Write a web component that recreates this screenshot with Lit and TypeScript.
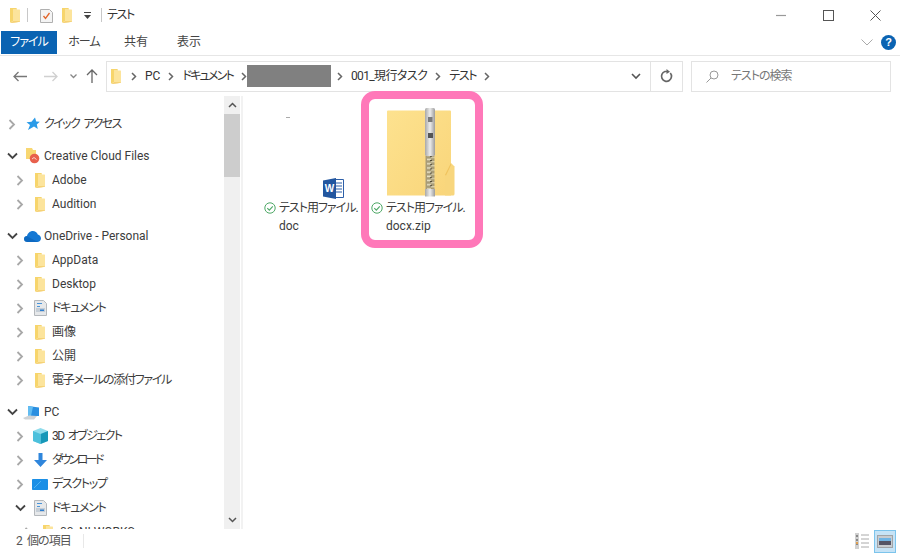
import { LitElement, html, css, svg } from "lit";
import { customElement } from "lit/decorators.js";

const folderSide = (w = 10, h = 15) => html`<svg width=${w} height=${h} viewBox="0 0 10 15">
  <path d="M3 1.500h6.500a.5.5 0 0 1 .5.500v11.500H3z" fill="#fce49c"/>
  <path d="M0 0h6.500l.5 1.500H3v11.800L0 14.500z" fill="#f7d56c"/>
  <path d="M3 13.300h7v.4l-4 .8-6 .5z" fill="#f3c85a"/>
</svg>`;

const chevR = () => html`<svg width="8" height="11" viewBox="0 0 8 11"><path d="M1.500 1l4.500 4.500L1.500 10" fill="none" stroke="#a8a8a8" stroke-width="1.800"/></svg>`;
const chevD = () => html`<svg width="11" height="8" viewBox="0 0 11 8"><path d="M1 1.500l4.500 4.500L10 1.500" fill="none" stroke="#444" stroke-width="1.800"/></svg>`;
const crumb = () => html`<svg class="crumb" width="6" height="9" viewBox="0 0 6 9"><path d="M1 1l3.500 3.500L1 8" fill="none" stroke="#666" stroke-width="1.500"/></svg>`;

const star = html`<svg width="16" height="14" viewBox="-2 0 16 14"><path d="M9 .5l1.200 4 3.600.3-3 2.600 1 4.600L8 9.600 2 13l2-5L.5 5.200l5-.4z" fill="#2a9be8"/></svg>`;
const ccFolder = html`<svg width="18" height="16" viewBox="-3 0 18 16"><path d="M0 0h6l1 2h3v9H0z" fill="#f8d772"/><circle cx="8.500" cy="10.500" r="4.800" fill="#e8604c"/><path d="M6 11l2-1.500 2.500 2" fill="none" stroke="#fbd0c8" stroke-width="1"/></svg>`;
const cloud = html`<svg width="17" height="11" viewBox="0 0 17 11"><path d="M3.500 11C1.500 11 0 9.700 0 8s1.300-3 3-3c.6-2.800 3-5 5.800-5 2.300 0 4.200 1.300 5 3.500 1.500.2 3.200 1.900 3.200 3.700 0 2.200-1.700 3.800-3.700 3.800z" fill="#1478d4"/><path d="M3 11C1.500 11 0 9.700 0 8c0-1.500 1-2.500 2.500-2.900L8 8l6 3z" fill="#0a5cb0" opacity=".55"/></svg>`;
const docIcon = html`<svg width="13" height="16" viewBox="0 0 13 16"><path d="M.5.500h9l3 3v12H.5z" fill="#e6e8ea" stroke="#b4b8bc"/><path d="M3 3h5v1H3zM3 6h3v1H3z" fill="#4a94d8"/><path d="M2 8h9v4H2z" fill="#c4cdd6"/><path d="M6 9.500h4v1.500H6z" fill="#2f7fd0"/></svg>`;
const pc = html`<svg width="20" height="15" viewBox="0 0 20 15"><path d="M6 1l11 1.500V11H6z" fill="#2a8fe0"/><path d="M6 1l5 .7-2 9.300H6z" fill="#63bdf2"/><path d="M1 13l6-2.500 8 .5-3 3.500H3z" fill="#cfd3d6"/></svg>`;
const cube = html`<svg width="15" height="16" viewBox="0 0 15 16"><path d="M7.500 0L15 3v10l-7.500 3L0 13V3z" fill="#8fdcec"/><path d="M7.500 6L15 3v10l-7.500 3z" fill="#1797b8"/><path d="M0 3l7.500 3v10L0 13z" fill="#4cc0dc"/></svg>`;
const dl = html`<svg width="13" height="14" viewBox="0 0 13 14"><path d="M4.500 0h4v7H13l-6.500 7L0 7h4.500z" fill="#2f86dc"/></svg>`;
const desk = html`<svg width="16" height="11" viewBox="0 0 16 11"><rect width="16" height="11" rx=".8" fill="#1b8fe6"/><path d="M2 9L9 2" stroke="#4fb2f2" stroke-width="1"/></svg>`;

type Row = { t: string; l: 0 | 1 | 2; c: "r" | "d"; i: unknown; k?: string };
const S1: Row[] = [{ t: "クイック アクセス", l: 0, c: "r", i: star, k: "ks" }];
const S2: Row[] = [
  { t: "Creative Cloud Files", l: 0, c: "d", i: ccFolder },
  { t: "Adobe", l: 1, c: "r", i: folderSide() },
  { t: "Audition", l: 1, c: "r", i: folderSide() },
];
const S3: Row[] = [
  { t: "OneDrive - Personal", l: 0, c: "d", i: cloud },
  { t: "AppData", l: 1, c: "r", i: folderSide() },
  { t: "Desktop", l: 1, c: "r", i: folderSide() },
  { t: "ドキュメント", l: 1, c: "r", i: docIcon, k: "k" },
  { t: "画像", l: 1, c: "r", i: folderSide() },
  { t: "公開", l: 1, c: "r", i: folderSide() },
  { t: "電子メールの添付ファイル", l: 1, c: "r", i: folderSide(), k: "k" },
];
const S4: Row[] = [
  { t: "PC", l: 0, c: "d", i: pc },
  { t: "3D オブジェクト", l: 1, c: "r", i: cube, k: "ks" },
  { t: "ダウンロード", l: 1, c: "r", i: dl, k: "kk" },
  { t: "デスクトップ", l: 1, c: "r", i: desk, k: "k" },
  { t: "ドキュメント", l: 1, c: "d", i: docIcon, k: "k" },
  { t: "00_NI WORKS", l: 2, c: "r", i: folderSide() },
];

const check = html`<svg class="check" width="12" height="12" viewBox="0 0 12 12"><circle cx="6" cy="6" r="5.200" fill="none" stroke="#4ea866" stroke-width="1"/><path d="M3.300 6.100l2 2 3.500-3.800" fill="none" stroke="#4ea866" stroke-width="1.100"/></svg>`;

const zipFolder = html`<svg width="70" height="89" viewBox="0 0 70 89">
  <defs>
    <linearGradient id="fg" x1="0" y1="0" x2="1" y2="1"><stop offset="0" stop-color="#fde28f"/><stop offset="1" stop-color="#f9d57a"/></linearGradient>
    <linearGradient id="zg" x1="0" y1="0" x2="1" y2="0"><stop offset="0" stop-color="#a8a8a8"/><stop offset=".5" stop-color="#ececec"/><stop offset="1" stop-color="#9c9c9c"/></linearGradient>
    <pattern id="teeth" width="10" height="4.200" patternUnits="userSpaceOnUse"><rect width="10" height="4.200" fill="#a89c78"/><rect x="1" y=".4" width="4" height="1.500" fill="#e8e2c8"/><rect x="5" y="2.500" width="4" height="1.300" fill="#d8d0b0"/><rect x="4" y="1.600" width="2" height="1" fill="#4e4838"/></pattern>
  </defs>
  <path d="M1 3.500a1 1 0 0 1 1-1h62a1 1 0 0 1 1 1V87.500H1z" fill="url(#fg)"/>
  <path d="M59 87.500V67l6-12 3.500 3.500V86a1.500 1.500 0 0 1-1.500 1.500z" fill="#f8d67d"/>
  <path d="M59 67l6-12v2l-5 10.500z" fill="#f0c25c"/>
  <rect x="39" y="0" width="10" height="48" rx="1.500" fill="url(#zg)"/>
  <rect x="39" y="81" width="10" height="7.500" fill="url(#zg)"/>
  <rect x="39.500" y="48" width="9" height="33" fill="url(#teeth)"/>
  <rect x="42" y="9" width="4.500" height="5" fill="#7a7a7a"/>
  <rect x="42" y="25" width="5" height="5" fill="#555"/>
</svg>`;

const wordIcon = html`<svg width="21" height="21" viewBox="0 0 21 21">
  <path d="M8 1.500h12.500v18H8z" fill="#fff" stroke="#2d5fa8"/>
  <path d="M13 5h6M13 8h6M13 11h6M13 14h6" stroke="#2d5fa8" stroke-width="1.200"/>
  <path d="M0 2.500L13 0v21L0 18.500z" fill="#22569f"/>
  ${svg`<text x="6.500" y="14" text-anchor="middle" font-family="Liberation Sans" font-weight="700" font-size="10" fill="#fff">W</text>`}
</svg>`;

@customElement("app-root")
export class AppRoot extends LitElement {
  static styles = css`
    :host { display: flex; flex-direction: column; width: 900px; height: 553px; overflow: hidden; background: #fff; color: #333;
      font-family: Roboto, "Noto Sans CJK JP", "Liberation Sans", sans-serif; font-size: 12px; line-height: 18px; font-feature-settings: "palt"; }
    svg { display: block; flex: none; }
    .k { letter-spacing: -1.3px; }
    .kd { letter-spacing: -1.8px; }
    .ks { letter-spacing: -1.6px; word-spacing: 3px; }
    .kk { letter-spacing: -2.6px; }
    .k1 { letter-spacing: -1px; }
    .k2 { letter-spacing: -0.6px; }
    .kst { letter-spacing: -0.9px; word-spacing: 3px; }
    .title { height: 30px; display: flex; align-items: center; flex: none; padding: 0 0 0 10px; }
    .title .sep { width: 1px; height: 14px; background: #c8c8c8; }
    .title .name { margin-left: 5px; }
    .title .sep.a { margin: 0 12px 0 7px; }
    .title .sep.b { margin-left: 10px; }
    .title .s9 { width: 9px; }
    .title .s12 { width: 12px; }
    .win { margin-left: auto; display: flex; align-items: center; gap: 36px; padding-right: 19px; }
    .tabs { height: 24px; display: flex; align-items: center; flex: none; padding-left: 1px; border-bottom: 1px solid #e6e6e6; padding-bottom: 1px; }
    .tab { width: 50px; text-align: center; color: #444; }
    .tab.file { width: 56px; height: 23px; line-height: 23px; background: #0a63b2; color: #fff; }
    .tab.home { width: 54px; }
    .tab.view { margin-left: 3px; }
    .tabs .right { margin-left: auto; display: flex; align-items: center; gap: 8px; padding-right: 4px; }
    .help { width: 15px; height: 15px; border-radius: 50%; background: #0a63b2; color: #fff; font: 700 11px/15px "Liberation Sans", sans-serif; text-align: center; }
    .nav { height: 40px; flex: none; display: flex; align-items: center; padding-left: 13px; }
    .navbtns { display: flex; align-items: center; width: 93px; gap: 0; }
    .navbtns .s17 { width: 17px; }
    .navbtns .s12 { width: 12px; }
    .navbtns .s9 { width: 9px; }
    .addr { width: 577px; height: 31px; box-sizing: border-box; border: 1px solid #e3e3e3; display: flex; align-items: center; padding-left: 4px; }
    .addr .crumb { margin: 0 8px; }
    .addr .s1 { width: 2px; }
    .addr .redact { width: 84px; height: 22px; background: #808080; margin-right: -2px; margin-left: -8px; }
    .addr .tail { margin-left: auto; display: flex; align-items: center; height: 100%; }
    .addr .tail .dd { margin-right: 9px; }
    .addr .tail .ref { width: 31px; height: 100%; border-left: 1px solid #e3e3e3; display: flex; align-items: center; justify-content: center; }
    .search { width: 200px; height: 31px; box-sizing: border-box; border: 1px solid #e3e3e3; margin-left: 8px; display: flex; align-items: center; padding-left: 14px; gap: 12px; color: #777; }
    .body { flex: 1; min-height: 0; display: flex; }
    .side { width: 224px; flex: none; overflow: hidden; padding-top: 16px; box-sizing: border-box; }
    .sec { margin-bottom: 8px; }
    .row { height: 24px; display: flex; align-items: center; white-space: nowrap; color: #3c3c3c; }
    .cv { width: 16px; display: flex; justify-content: center; flex: none; }
    .ic { width: 24px; flex: none; display: flex; justify-content: center; }
    .l0 { padding-left: 4px; }
    .l1 { padding-left: 12px; }
    .l2 { padding-left: 20px; }
    .sb { width: 16px; flex: none; background: #f0f0f0; display: flex; flex-direction: column; align-items: center; }
    .sb .btn { height: 18px; display: flex; align-items: center; justify-content: center; flex: none; }
    .sb .thumb { width: 16px; height: 63px; background: #cdcdcd; flex: none; }
    .sb .btn.last { margin-top: auto; }
    .main { flex: 1; display: flex; border-left: 2px solid #f2f2f2; padding-left: 18px; margin-left: 1px; }
    .tile { width: 107px; position: relative; flex: none; display: flex; flex-direction: column; }
    .thumb1 { height: 103px; display: flex; flex-direction: column; justify-content: space-between; padding-top: 21px; box-sizing: border-box; }
    .dash { width: 4px; height: 1px; background: #aaa; margin-left: 25px; }
    .wi { margin-left: 62px; }
    .thumb2 { height: 103px; padding: 12px 0 0 18px; box-sizing: border-box; }
    .label { display: flex; gap: 3px; padding-left: 3px; color: #3c3c3c; white-space: nowrap; }
    .check { margin-top: 3px; }
    .frame { position: absolute; left: -7px; top: -5px; width: 122px; height: 157px; box-sizing: border-box; border: 8px solid #ff78b9; border-radius: 14px; }
    .status { height: 24px; flex: none; display: flex; align-items: center; padding-left: 16px; color: #555; }
    .status .sep { width: 1px; height: 14px; background: #e8e8e8; margin-left: 12px; }
    .views { margin-left: auto; display: flex; align-items: center; gap: 5px; padding-right: 4px; }
    .view-on { width: 22px; height: 23px; box-sizing: border-box; background: #c6e3f6; border: 1px solid #7cc4ec; display: flex; align-items: center; justify-content: center; }
  `;

  private row(r: Row) {
    return html`<div class="row l${r.l}">
      <span class="cv">${r.c === "r" ? chevR() : chevD()}</span>
      <span class="ic">${r.i}</span>
      <span class=${r.k ?? ""}>${r.t}</span>
    </div>`;
  }

  render() {
    return html`
      <div class="title">
        ${folderSide()}
        <span class="sep a"></span>
        <svg width="13" height="15" viewBox="0 0 13 15"><path d="M.5 1.500h9l3 3v10H.5z" fill="#f4f4f4" stroke="#b0b0b0"/><path d="M3.500 8l2 2.500 4-5.500" fill="none" stroke="#e2652a" stroke-width="1.300"/></svg>
        <span class="s9"></span>
        ${folderSide()}
        <span class="s12"></span>
        <svg width="7" height="7" viewBox="0 0 7 7"><path d="M0 0h7v1H0zM0 3h7L3.500 7z" fill="#444"/></svg>
        <span class="sep b"></span>
        <span class="name k">テスト</span>
        <div class="win">
          <svg width="11" height="11" viewBox="0 0 11 11"><path d="M0 5.500h10" stroke="#999" stroke-width="1.200"/></svg>
          <svg width="11" height="11" viewBox="0 0 11 11"><rect x=".5" y=".5" width="10" height="10" fill="none" stroke="#555"/></svg>
          <svg width="11" height="11" viewBox="0 0 11 11"><path d="M.5.500l10 10M10.500.500l-10 10" stroke="#555"/></svg>
        </div>
      </div>
      <div class="tabs">
        <div class="tab file k1">ファイル</div>
        <div class="tab home k1">ホーム</div>
        <div class="tab">共有</div>
        <div class="tab view">表示</div>
        <div class="right">
          <svg width="12" height="7" viewBox="0 0 12 7"><path d="M.5.500L6 6l5.500-5.500" fill="none" stroke="#aaa"/></svg>
          <div class="help">?</div>
        </div>
      </div>
      <div class="nav">
        <div class="navbtns">
          <svg width="14" height="11" viewBox="0 0 14 11"><path d="M14 5.500H1M5.500 1L1 5.500 5.500 10" fill="none" stroke="#777" stroke-width="1.300"/></svg>
          <span class="s17"></span>
          <svg width="14" height="11" viewBox="0 0 14 11"><path d="M0 5.500h13M8.500 1L13 5.500 8.500 10" fill="none" stroke="#d0d0d0" stroke-width="1.300"/></svg>
          <span class="s12"></span>
          <svg width="7" height="5" viewBox="0 0 7 5"><path d="M.5.500l3 3 3-3" fill="none" stroke="#888" stroke-width="1.300"/></svg>
          <span class="s9"></span>
          <svg width="12" height="14" viewBox="0 0 12 14"><path d="M6 14V1M1 6l5-5 5 5" fill="none" stroke="#666" stroke-width="1.300"/></svg>
        </div>
        <div class="addr">
          ${folderSide()}
          <span class="s1"></span>
          ${crumb()}<span>PC</span>${crumb()}<span class="kd">ドキュメント</span>${crumb()}
          <span class="redact"></span>
          ${crumb()}<span class="k2">001_現行タスク</span>${crumb()}<span class="k">テスト</span>${crumb()}
          <div class="tail">
            <svg class="dd" width="10" height="7" viewBox="0 0 10 7"><path d="M1 1l4 4 4-4" fill="none" stroke="#555" stroke-width="1.600"/></svg>
            <div class="ref"><svg width="13" height="14" viewBox="0 0 13 14"><path d="M10.300 4A5 5 0 1 1 5 2.500h3" fill="none" stroke="#666" stroke-width="1.700"/><path d="M6.500 0L10 2.700 6.500 5z" fill="#666"/></svg></div>
          </div>
        </div>
        <div class="search">
          <svg width="13" height="13" viewBox="0 0 13 13"><circle cx="8" cy="5" r="4" fill="none" stroke="#999"/><path d="M5 8l-4.500 4.500" stroke="#999"/></svg>
          <span class="k1">テストの検索</span>
        </div>
      </div>
      <div class="body">
        <div class="side">
          <div class="sec">${S1.map((r) => this.row(r))}</div>
          <div class="sec">${S2.map((r) => this.row(r))}</div>
          <div class="sec">${S3.map((r) => this.row(r))}</div>
          <div class="sec">${S4.map((r) => this.row(r))}</div>
        </div>
        <div class="sb">
          <div class="btn"><svg width="9" height="6" viewBox="0 0 9 6"><path d="M1 5l3.500-3.500L8 5" fill="none" stroke="#555" stroke-width="1.500"/></svg></div>
          <div class="thumb"></div>
          <div class="btn last"><svg width="9" height="6" viewBox="0 0 9 6"><path d="M1 1l3.500 3.500L8 1" fill="none" stroke="#555" stroke-width="1.500"/></svg></div>
        </div>
        <div class="main">
          <div class="tile">
            <div class="thumb1"><div class="dash"></div><div class="wi">${wordIcon}</div></div>
            <div class="label">${check}<span><span class="k1">テスト用ファイル.</span><br />doc</span></div>
          </div>
          <div class="tile">
            <div class="thumb2">${zipFolder}</div>
            <div class="label">${check}<span><span class="k1">テスト用ファイル.</span><br />docx.zip</span></div>
            <div class="frame"></div>
          </div>
        </div>
      </div>
      <div class="status">
        <span class="kst">2 個の項目</span><span class="sep"></span>
        <div class="views">
          <svg width="14" height="16" viewBox="0 0 14 16"><rect x="0" y="0" width="4" height="16" fill="#d0d0d0"/><path d="M1 2h2v2H1zM1 6h2v2H1zM1 10h2v2H1z" fill="#888"/><path d="M1 9h2v2H1z" fill="#e0a050"/><path d="M6 2h8M6 6h8M6 10h8M6 14h8" stroke="#aaa"/></svg>
          <div class="view-on"><svg width="16" height="13" viewBox="0 0 16 13"><rect x=".5" y=".5" width="15" height="12" fill="#c8ccd0" stroke="#a0a4a8"/><rect x="2" y="3" width="12" height="3" fill="#6fb4e4"/><path d="M2 6h12v4H2z" fill="#556"/></svg></div>
        </div>
      </div>
    `;
  }
}
